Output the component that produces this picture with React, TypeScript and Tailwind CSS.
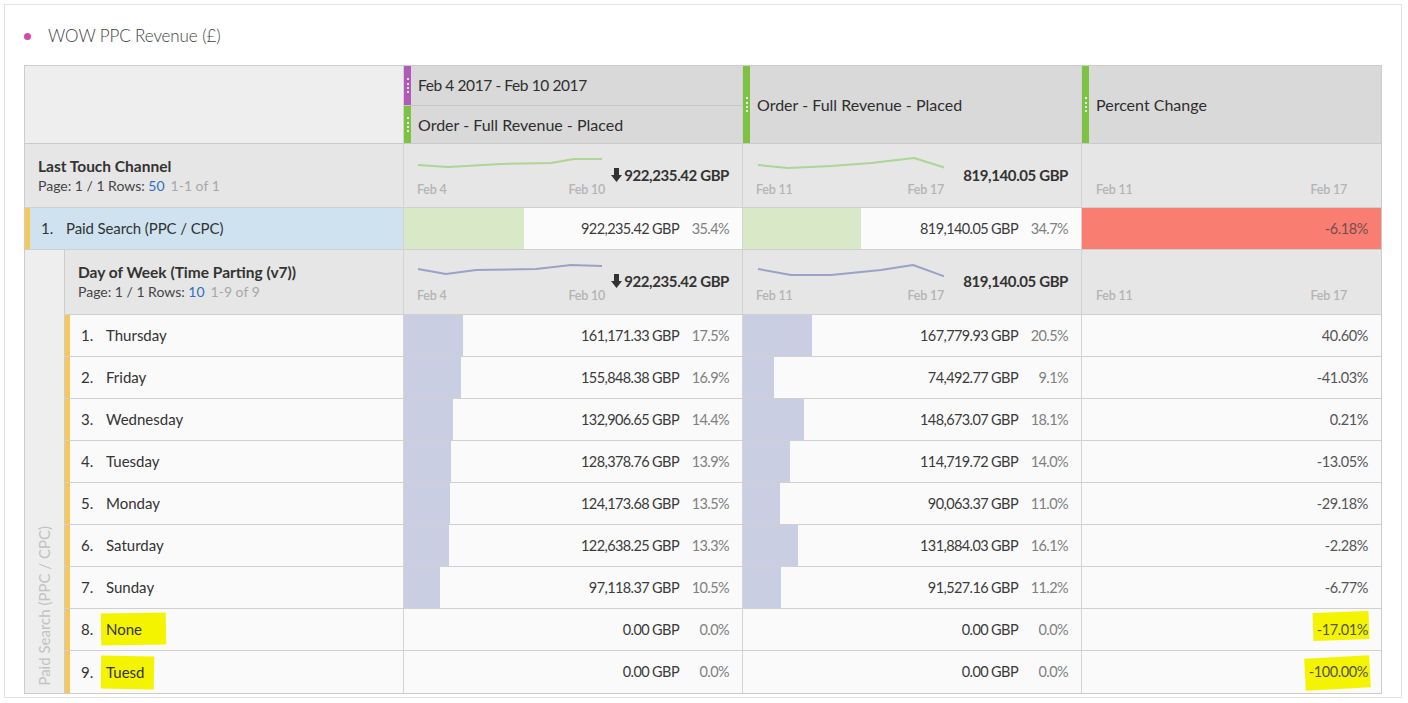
import React from 'react';

type Pt = [number, number];

// sparkline points are taken in page pixels, then shifted into the svg box
function Spark({ pts, x0, y0, color }: { pts: Pt[]; x0: number; y0: number; color: string }) {
  const d = pts.map(([x, y]) => `${x - x0},${y - y0}`).join(' ');
  return (
    <svg width="188" height="18" className="block">
      <polyline points={d} fill="none" stroke={color} strokeWidth="2" strokeLinejoin="round" />
    </svg>
  );
}

function DownArrow() {
  return (
    <svg width="11" height="14" viewBox="0 0 11 14" className="mr-[2px] inline-block">
      <path d="M3 0h5v7h3l-5.5 7L0 7h3z" fill="#333" />
    </svg>
  );
}

function Grip({ color }: { color: string }) {
  return (
    <div className={`flex h-full w-[7px] shrink-0 items-center justify-center ${color}`}>
      <div className="h-[15px] border-l-2 border-dotted border-white/80" />
    </div>
  );
}

function SummaryMetric({
  pts,
  color,
  from,
  to,
  total,
  arrow,
  x0,
  y0,
}: {
  pts?: Pt[];
  color: string;
  from: string;
  to: string;
  total?: string;
  arrow?: boolean;
  x0: number;
  y0: number;
}) {
  return (
    <div className="flex h-full items-start border-r border-[#d3d3d3] pl-[13px] pr-[13px] pt-[11px]">
      <div className="w-[188px]">
        <div className="h-[18px]">{pts && <Spark pts={pts} x0={x0} y0={y0} color={color} />}</div>
        <div className="mt-[9px] flex justify-between text-[12.5px] font-semibold leading-[16px] tracking-[-0.2px] text-[#b4b4b4]">
          <span>{from}</span>
          <span>{to}</span>
        </div>
      </div>
      {total && (
        <div className="ml-auto mt-[10px] flex items-center text-[15px] font-bold leading-[20px] tracking-[-0.4px] text-[#333]">
          {arrow && <DownArrow />}
          {total}
        </div>
      )}
    </div>
  );
}

function MetricCell({ pct, value, bar, bg = 'bg-[#fafafa]' }: { pct: number; value: string; bar: string; bg?: string }) {
  return (
    <div className="flex h-full w-[339px] border-r border-[#d3d3d3]">
      <div className={`h-full shrink-0 ${bar}`} style={{ width: `${pct * 3.39}px` }} />
      <div className={`flex flex-1 items-center justify-end pr-[13px] text-[14.5px] tracking-[-0.6px] ${bg}`}>
        <span className="text-[#3b3b3b]">{value}</span>
        <span className="w-[50px] text-right text-[#808080]">{pct.toFixed(1)}%</span>
      </div>
    </div>
  );
}

function Highlight({ children, box }: { children: React.ReactNode; box: string }) {
  return (
    <span className="relative inline-block">
      <span className={`absolute bg-[#f4f400] ${box}`} />
      <span className="relative">{children}</span>
    </span>
  );
}

const days: [string, string, number, string, number, string][] = [
  ['Thursday', '161,171.33 GBP', 17.5, '167,779.93 GBP', 20.5, '40.60%'],
  ['Friday', '155,848.38 GBP', 16.9, '74,492.77 GBP', 9.1, '-41.03%'],
  ['Wednesday', '132,906.65 GBP', 14.4, '148,673.07 GBP', 18.1, '0.21%'],
  ['Tuesday', '128,378.76 GBP', 13.9, '114,719.72 GBP', 14.0, '-13.05%'],
  ['Monday', '124,173.68 GBP', 13.5, '90,063.37 GBP', 11.0, '-29.18%'],
  ['Saturday', '122,638.25 GBP', 13.3, '131,884.03 GBP', 16.1, '-2.28%'],
  ['Sunday', '97,118.37 GBP', 10.5, '91,527.16 GBP', 11.2, '-6.77%'],
  ['None', '0.00 GBP', 0, '0.00 GBP', 0, '-17.01%'],
  ['Tuesd', '0.00 GBP', 0, '0.00 GBP', 0, '-100.00%'],
];

export default function App() {
  return (
    <div className="min-h-[703px] bg-white font-['Lato',sans-serif] text-[#333]">
      <div className="ml-[4px] mt-[4px] h-[694px] w-[1398px] border border-[#e2e2e2] pl-[19px]">
        <div className="flex h-[60px] items-center gap-[17px] pt-[2px]">
          <span className="h-[7px] w-[7px] rounded-full bg-[#d54ba6]" />
          <span className="text-[17px] font-light tracking-[-0.1px] text-[#3e3e3e]">WOW PPC Revenue (£)</span>
        </div>

        <div className="w-[1358px] border border-[#cccccc]">
          {/* column headers */}
          <div className="flex h-[78px] border-b border-[#c9c9c9]">
            <div className="w-[379px] border-r border-[#d3d3d3] bg-[#eeeeee]" />
            <div className="flex w-[339px] flex-col border-r border-[#d3d3d3] bg-[#d9d9d9]">
              <div className="flex h-[40px] items-center border-b border-[#c6c6c6]">
                <Grip color="bg-[#b05cb7]" />
                <span className="pl-[7px] text-[15.5px] tracking-[-0.4px] text-[#2e2e2e]">Feb 4 2017 - Feb 10 2017</span>
              </div>
              <div className="flex flex-1 items-center">
                <Grip color="bg-[#7dc243]" />
                <span className="pl-[7px] text-[16px] text-[#2e2e2e]">Order - Full Revenue - Placed</span>
              </div>
            </div>
            <div className="flex w-[339px] items-center border-r border-[#d3d3d3] bg-[#d9d9d9]">
              <Grip color="bg-[#7dc243]" />
              <span className="pl-[7px] text-[16px] text-[#2e2e2e]">Order - Full Revenue - Placed</span>
            </div>
            <div className="flex w-[299px] items-center bg-[#d9d9d9]">
              <Grip color="bg-[#7dc243]" />
              <span className="pl-[7px] text-[16px] text-[#2e2e2e]">Percent Change</span>
            </div>
          </div>

          {/* Last Touch Channel summary */}
          <div className="flex h-[64px] border-b border-[#d0d0d0] bg-[#e6e6e6]">
            <div className="w-[379px] border-r border-[#d3d3d3] pl-[13px] pt-[12px] leading-[20px]">
              <div className="text-[15.5px] font-bold text-[#333]">Last Touch Channel</div>
              <div className="text-[14px] text-[#444]">
                Page: 1 / 1 Rows: <span className="text-[#2f6fc1]">50</span>
                <span className="ml-[6px] text-[#a8a8a8]">1-1 of 1</span>
              </div>
            </div>
            <div className="w-[339px]">
              <SummaryMetric
                pts={[[417, 165], [447, 167], [500, 164], [550, 163], [573, 159], [601, 159]]}
                x0={416}
                y0={155}
                color="#acd596"
                from="Feb 4"
                to="Feb 10"
                total="922,235.42 GBP"
                arrow
              />
            </div>
            <div className="w-[339px]">
              <SummaryMetric
                pts={[[757, 165], [787, 168], [830, 166], [870, 163], [913, 158], [945, 168]]}
                x0={755}
                y0={155}
                color="#acd596"
                from="Feb 11"
                to="Feb 17"
                total="819,140.05 GBP"
              />
            </div>
            <div className="w-[299px] pl-[14px] pr-[34px] pt-[29px]">
              <div className="mt-[9px] flex justify-between text-[12.5px] font-semibold leading-[16px] tracking-[-0.2px] text-[#b4b4b4]">
                <span>Feb 11</span>
                <span>Feb 17</span>
              </div>
            </div>
          </div>

          {/* Paid Search row */}
          <div className="flex h-[42px] border-b border-[#d0d0d0]">
            <div className="flex w-[379px] items-center border-r border-[#d3d3d3] bg-[#cee2ef]">
              <div className="h-full w-[5px] bg-[#f6c75b]" />
              <span className="w-[36px] pl-[11px] text-[15px] text-[#333]">1.</span>
              <span className="text-[15px] tracking-[-0.1px] text-[#333]">Paid Search (PPC / CPC)</span>
            </div>
            <MetricCell pct={35.4} value="922,235.42 GBP" bar="bg-[#d9e8c7]" bg="bg-[#fbfbfb]" />
            <MetricCell pct={34.7} value="819,140.05 GBP" bar="bg-[#d9e8c7]" bg="bg-[#fbfbfb]" />
            <div className="flex w-[299px] items-center justify-end bg-[#fa7d71] pr-[13px] text-[14.5px] tracking-[-0.4px] text-[#6e514e]">
              -6.18%
            </div>
          </div>

          {/* nested breakdown */}
          <div className="flex">
            <div className="flex w-[40px] items-end justify-center border-r border-[#cdcdcd] bg-[#eeeeee] pb-[7px]">
              <span className="rotate-180 text-[15px] text-[#c2c2c2] [writing-mode:vertical-rl]">
                Paid Search (PPC / CPC)
              </span>
            </div>
            <div className="flex-1">
              <div className="flex h-[65px] border-b border-[#d0d0d0] bg-[#e6e6e6]">
                <div className="w-[339px] border-r border-[#d3d3d3] pl-[13px] pt-[12px] leading-[20px]">
                  <div className="text-[15.5px] font-bold text-[#333]">Day of Week (Time Parting (v7))</div>
                  <div className="text-[14px] text-[#444]">
                    Page: 1 / 1 Rows: <span className="text-[#2f6fc1]">10</span>
                    <span className="ml-[6px] text-[#a8a8a8]">1-9 of 9</span>
                  </div>
                </div>
                <div className="w-[339px]">
                  <SummaryMetric
                    pts={[[417, 269], [445, 274], [475, 270], [535, 269], [570, 265], [601, 266]]}
                    x0={416}
                    y0={261}
                    color="#9aa2c8"
                    from="Feb 4"
                    to="Feb 10"
                    total="922,235.42 GBP"
                    arrow
                  />
                </div>
                <div className="w-[339px]">
                  <SummaryMetric
                    pts={[[757, 269], [790, 275], [830, 275], [880, 270], [912, 265], [945, 277]]}
                    x0={755}
                    y0={261}
                    color="#9aa2c8"
                    from="Feb 11"
                    to="Feb 17"
                    total="819,140.05 GBP"
                  />
                </div>
                <div className="w-[299px] pl-[14px] pr-[34px] pt-[29px]">
                  <div className="mt-[9px] flex justify-between text-[12.5px] font-semibold leading-[16px] tracking-[-0.2px] text-[#b4b4b4]">
                    <span>Feb 11</span>
                    <span>Feb 17</span>
                  </div>
                </div>
              </div>

              {days.map(([name, v1, p1, v2, p2, change], i) => {
                const marked = name === 'None' || name === 'Tuesd';
                return (
                  <div key={name} className={`flex h-[42px] ${i < days.length - 1 ? 'border-b border-[#d0d0d0]' : ''}`}>
                    <div className="flex w-[339px] items-center border-r border-[#d3d3d3] bg-[#fafafa]">
                      <div className="h-full w-[5px] bg-[#f6c75b]" />
                      <span className="w-[36px] pl-[11px] text-[15px] text-[#333]">{i + 1}.</span>
                      <span className="text-[15px] text-[#333]">
                        {marked ? (
                          <Highlight box={name === 'None' ? '-left-[5px] -right-[24px] -top-[5px] -bottom-[4px] -rotate-1' : '-left-[5px] -right-[10px] -top-[5px] -bottom-[5px] rotate-1'}>
                            {name}
                          </Highlight>
                        ) : (
                          name
                        )}
                      </span>
                    </div>
                    <MetricCell pct={p1} value={v1} bar="bg-[#c9cee2]" />
                    <MetricCell pct={p2} value={v2} bar="bg-[#c9cee2]" />
                    <div className="flex w-[299px] items-center justify-end bg-[#fafafa] pr-[13px] text-[14.5px] tracking-[-0.4px] text-[#555]">
                      {marked ? (
                        <Highlight box={change === '-17.01%' ? '-left-[4px] -right-[1px] -top-[7px] bottom-[1px] -rotate-2' : '-left-[4px] -right-[2px] -top-[4px] -bottom-[6px] -rotate-3'}>
                          {change}
                        </Highlight>
                      ) : (
                        change
                      )}
                    </div>
                  </div>
                );
              })}
            </div>
          </div>
        </div>
      </div>
    </div>
  );
}
